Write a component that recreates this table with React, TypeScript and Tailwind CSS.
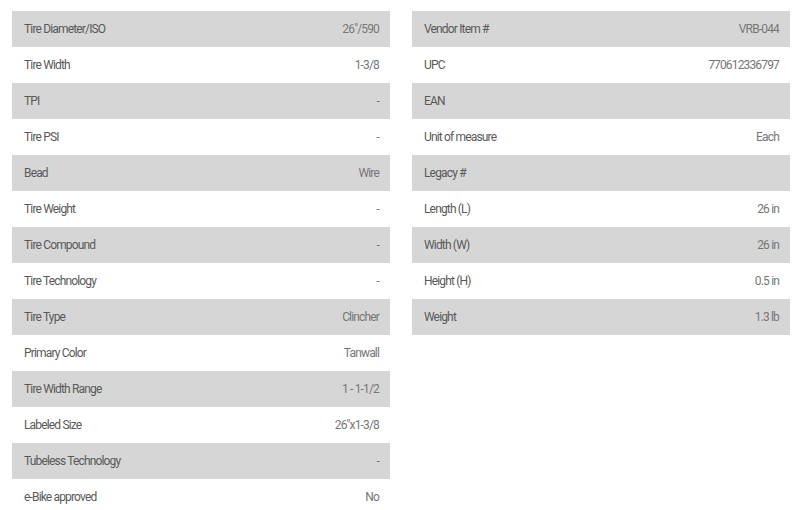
import React from "react";

const tireSpecs = [
  { label: "Tire Diameter/ISO", value: "26\"/590" },
  { label: "Tire Width", value: "1-3/8" },
  { label: "TPI", value: "-" },
  { label: "Tire PSI", value: "-" },
  { label: "Bead", value: "Wire" },
  { label: "Tire Weight", value: "-" },
  { label: "Tire Compound", value: "-" },
  { label: "Tire Technology", value: "-" },
  { label: "Tire Type", value: "Clincher" },
  { label: "Primary Color", value: "Tanwall" },
  { label: "Tire Width Range", value: "1 - 1-1/2" },
  { label: "Labeled Size", value: "26\"x1-3/8" },
  { label: "Tubeless Technology", value: "-" },
  { label: "e-Bike approved", value: "No" },
];

const itemSpecs = [
  { label: "Vendor Item #", value: "VRB-044" },
  { label: "UPC", value: "770612336797" },
  { label: "EAN", value: "" },
  { label: "Unit of measure", value: "Each" },
  { label: "Legacy #", value: "" },
  { label: "Length (L)", value: "26 in" },
  { label: "Width (W)", value: "26 in" },
  { label: "Height (H)", value: "0.5 in" },
  { label: "Weight", value: "1.3 lb" },
];

function SpecTable({ rows }: { rows: { label: string; value: string }[] }) {
  return (
    <div className="w-[378px] flex flex-col">
      {rows.map((row, i) => (
        <div
          key={row.label}
          className={`h-9 flex items-center justify-between pl-3 pr-[11px] text-[12px] tracking-[-0.07em] ${
            i % 2 === 0 ? "bg-[#d6d6d6]" : "bg-white"
          }`}
        >
          <span className="text-[#595959]">{row.label}</span>
          <span className="text-[#767676]">{row.value}</span>
        </div>
      ))}
    </div>
  );
}

export default function App() {
  return (
    <div
      className="w-[800px] h-[510px] overflow-hidden bg-white pl-3 pt-[11px] flex items-start gap-[22px]"
      style={{ fontFamily: "Roboto, 'Liberation Sans', sans-serif" }}
    >
      <SpecTable rows={tireSpecs} />
      <SpecTable rows={itemSpecs} />
    </div>
  );
}
